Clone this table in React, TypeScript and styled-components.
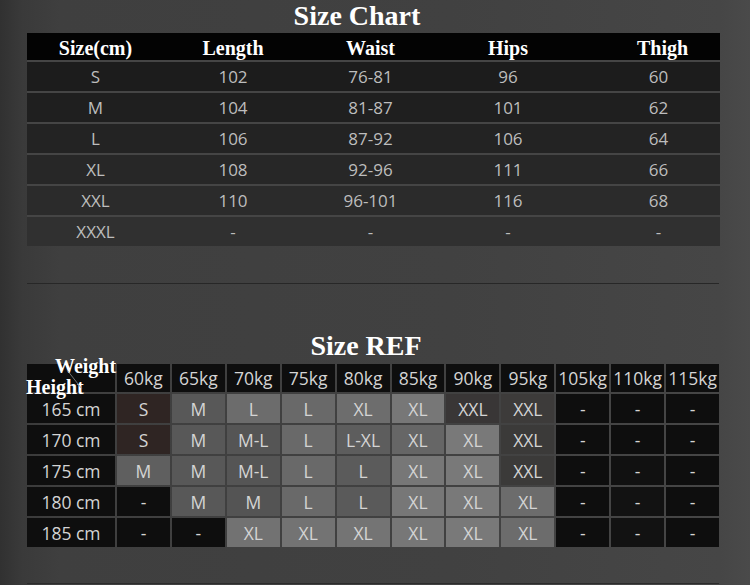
import { Fragment } from "react";
import styled, { createGlobalStyle } from "styled-components";

const GlobalStyle = createGlobalStyle`
    body {
        margin: 0;
        background: #3e3e3e;
    }
`;

const Page = styled.div`
    width: 750px;
    height: 585px;
    box-sizing: border-box;
    padding: 2px 30px 0 27px;
    display: flex;
    flex-direction: column;
    overflow: hidden;
    background: linear-gradient(90deg, #313131 0%, #3a3a3a 3%, #3f3f3f 8%, #414141 60%, #464646 96%, #4a4a4a 100%);
`;

const Title = styled.h1<{ $shift: number; $gap: number }>`
    margin: ${p => p.$gap}px 0 0 0;
    padding-right: ${p => p.$shift}px;
    font-family: "Liberation Serif", "Times New Roman", serif;
    font-weight: bold;
    font-size: 28px;
    line-height: 28px;
    color: #ffffff;
    text-align: center;
`;

const ChartGrid = styled.div`
    margin-top: 3px;
    display: grid;
    grid-template-columns: 137px 138px 137px 138px 143px;
    grid-template-rows: 27px repeat(6, 29px);
    row-gap: 2px;
    background: #454545;
`;

const HeadCell = styled.div<{ $pad?: number }>`
    background: #030303;
    color: #ffffff;
    font-family: "Liberation Serif", "Times New Roman", serif;
    font-weight: bold;
    font-size: 20px;
    display: flex;
    align-items: center;
    justify-content: center;
    padding-left: ${p => p.$pad ?? 0}px;
    padding-top: 3px;
`;

const BodyCell = styled.div<{ $bg: string; $pad?: number }>`
    background: ${p => p.$bg};
    color: #bdbdbd;
    font-family: "Open Sans", "Noto Sans", sans-serif;
    font-size: 17px;
    display: flex;
    align-items: center;
    justify-content: center;
    padding-left: ${p => p.$pad ?? 0}px;
`;

const Rule = styled.div<{ $gap: number; $color: string }>`
    margin-top: ${p => p.$gap}px;
    height: 1px;
    width: 692px;
    background: ${p => p.$color};
`;

const RefGrid = styled.div`
    margin-top: 4px;
    width: 692px;
    display: grid;
    grid-template-columns: 88px repeat(11, 1fr);
    grid-template-rows: 28px repeat(5, 29px);
    gap: 2px;
`;

const Corner = styled.div`
    position: relative;
    background: #0d0d0d;
`;

const CornerLabel = styled.span<{ $left: number; $top: number }>`
    position: absolute;
    left: ${p => p.$left}px;
    top: ${p => p.$top}px;
    font-family: "Liberation Serif", "Times New Roman", serif;
    font-weight: bold;
    font-size: 20px;
    line-height: 20px;
    color: #ffffff;
    white-space: nowrap;
`;

const Slash = styled.svg`
    position: absolute;
    left: 39px;
    top: 5px;
`;

const RefCell = styled.div<{ $bg: string }>`
    background: ${p => p.$bg};
    color: #d4d4d4;
    font-family: "Open Sans", "Noto Sans", sans-serif;
    font-size: 17.5px;
    display: flex;
    align-items: center;
    justify-content: center;
`;

const chartHead = ["Size(cm)", "Length", "Waist", "Hips", "Thigh"];
const chartRows = [
    ["S", "102", "76-81", "96", "60"],
    ["M", "104", "81-87", "101", "62"],
    ["L", "106", "87-92", "106", "64"],
    ["XL", "108", "92-96", "111", "66"],
    ["XXL", "110", "96-101", "116", "68"],
    ["XXXL", "-", "-", "-", "-"],
];
const chartShades = ["#1c1c1c", "#1f1f1f", "#232323", "#272727", "#2b2b2b", "#303030"];

const weights = ["60kg", "65kg", "70kg", "75kg", "80kg", "85kg", "90kg", "95kg", "105kg", "110kg", "115kg"];

const K = "#0e0e0e";
const refRows: { height: string; cells: [string, string][] }[] = [
    {
        height: "165 cm",
        cells: [["S", "#2f2523"], ["M", "#585858"], ["L", "#6c6c6c"], ["L", "#696969"], ["XL", "#6d6d6d"], ["XL", "#777777"], ["XXL", "#393636"], ["XXL", "#3d3b3a"], ["-", K], ["-", K], ["-", K]],
    },
    {
        height: "170 cm",
        cells: [["S", "#2f2523"], ["M", "#585858"], ["M-L", "#555555"], ["L", "#696969"], ["L-XL", "#5d5d5d"], ["XL", "#666666"], ["XL", "#797979"], ["XXL", "#3b3a39"], ["-", K], ["-", K], ["-", K]],
    },
    {
        height: "175 cm",
        cells: [["M", "#5f5f5f"], ["M", "#585858"], ["M-L", "#555555"], ["L", "#696969"], ["L", "#5b5b5b"], ["XL", "#777777"], ["XL", "#797979"], ["XXL", "#3b3a39"], ["-", K], ["-", "#111111"], ["-", K]],
    },
    {
        height: "180 cm",
        cells: [["-", K], ["M", "#585858"], ["M", "#545454"], ["L", "#696969"], ["L", "#5a5a5a"], ["XL", "#777777"], ["XL", "#797979"], ["XL", "#6c6c6c"], ["-", K], ["-", "#121212"], ["-", K]],
    },
    {
        height: "185 cm",
        cells: [["-", K], ["-", K], ["XL", "#727272"], ["XL", "#737373"], ["XL", "#747474"], ["XL", "#777777"], ["XL", "#797979"], ["XL", "#6c6c6c"], ["-", K], ["-", "#121212"], ["-", K]],
    },
];

export default function App() {
    return (
        <>
            <GlobalStyle />
            <Page>
                <Title $shift={33} $gap={0}>Size Chart</Title>
                <ChartGrid>
                    {chartHead.map((h, i) => (
                        <HeadCell key={h} $pad={i === 4 ? 28 : 0}>{h}</HeadCell>
                    ))}
                    {chartRows.map((row, r) =>
                        row.map((v, c) => (
                            <BodyCell key={`${r}-${c}`} $bg={chartShades[r]} $pad={c === 4 ? 20 : 0}>{v}</BodyCell>
                        ))
                    )}
                </ChartGrid>
                <Rule $gap={37} $color="#272727" />
                <Title $shift={15} $gap={48}>Size REF</Title>
                <RefGrid>
                    <Corner>
                        <CornerLabel $left={28} $top={-8}>Weight</CornerLabel>
                        <CornerLabel $left={-1} $top={13}>Height</CornerLabel>
                        <Slash width="20" height="22" viewBox="0 0 20 22">
                            <line x1="1" y1="1" x2="16" y2="20" stroke="#8a8a8a" strokeWidth="0.8" />
                        </Slash>
                    </Corner>
                    {weights.map(w => (
                        <RefCell key={w} $bg="#0e0e0e">{w}</RefCell>
                    ))}
                    {refRows.map(row => (
                        <Fragment key={row.height}>
                            <RefCell $bg="#0e0e0e">{row.height}</RefCell>
                            {row.cells.map(([v, bg], i) => (
                                <RefCell key={i} $bg={bg}>{v}</RefCell>
                            ))}
                        </Fragment>
                    ))}
                </RefGrid>
                <Rule $gap={36} $color="#2c2c2c" />
            </Page>
        </>
    );
}
